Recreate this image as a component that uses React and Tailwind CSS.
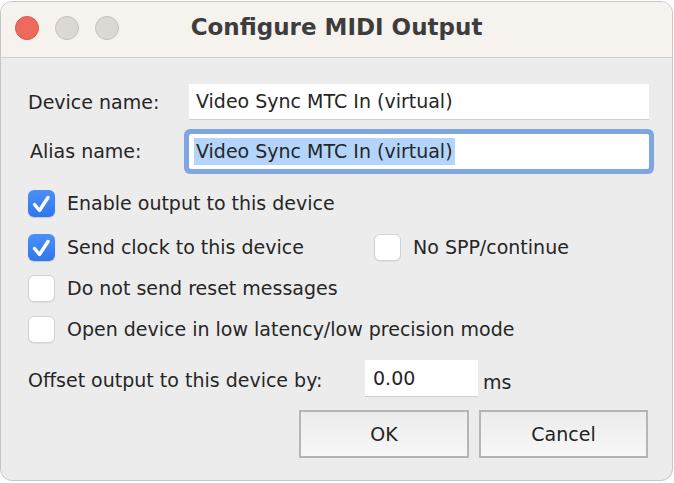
import React from 'react';

const font = { fontFamily: '"DejaVu Sans", "Liberation Sans", sans-serif' };

const CheckBox = ({ checked }) =>
  checked ? (
    <span className="flex h-[27px] w-[27px] shrink-0 items-center justify-center rounded-[6px] bg-gradient-to-b from-[#4b90f8] to-[#2f76ef] shadow-[0_1px_1px_rgba(0,0,0,0.15)]">
      <svg width="27" height="27" viewBox="0 0 27 27" fill="none">
        <path d="M6.5 14.5 L11.5 20.5 L20 7.5" stroke="white" strokeWidth="3.4" strokeLinecap="round" strokeLinejoin="round" />
      </svg>
    </span>
  ) : (
    <span className="block h-[27px] w-[27px] shrink-0 rounded-[6px] border border-[#d2d2d2] bg-white shadow-[0_1px_1px_rgba(0,0,0,0.06)]" />
  );

const CheckRow = ({ checked, label, className = '' }) => (
  <div className={`flex items-center gap-3 ${className}`}>
    <CheckBox checked={checked} />
    <span>{label}</span>
  </div>
);

const Light = ({ color }) => (
  <span className={`block h-[24px] w-[24px] rounded-full border ${color}`} />
);

export default function App() {
  return (
    <div className="h-[483px] w-[674px] bg-white pt-px text-[19px] leading-[27px] text-[#262626]" style={font}>
      <div className="flex h-[480px] w-[673px] flex-col overflow-hidden rounded-[12px] border border-[#c6c6c6] bg-[#ececec]">
        <div className="grid h-[56px] grid-cols-[1fr_auto_1fr] items-center border-b border-[#d4d1cd] bg-[#f6f3ee]">
          <div className="flex items-center gap-4 pl-[14px] pb-[3px]">
            <Light color="bg-[#ee6a5f] border-[#d9564b]" />
            <Light color="bg-[#dcd8d3] border-[#c6c2bd]" />
            <Light color="bg-[#dcd8d3] border-[#c6c2bd]" />
          </div>
          <div className="pb-[4px] text-[23px] font-bold text-[#3d3d3d]">Configure MIDI Output</div>
          <div />
        </div>

        <div className="flex flex-col pl-[27px]">
          <div className="mt-[26px] flex items-center">
            <span className="w-[161px]">Device name:</span>
            <div className="flex h-[36px] w-[460px] items-center border-b border-[#cfcfcf] bg-white pl-[7px]">
              Video Sync MTC In (virtual)
            </div>
          </div>

          <div className="mt-[14px] flex items-center">
            <span className="w-[161px] pl-[2px]">Alias name:</span>
            <div className="flex h-[35px] w-[460px] items-center rounded-[2px] bg-white pl-[5px] ring-[5px] ring-[#7fa6e0]">
              <span className="bg-[#b3d4fb] px-[2px] leading-[27px]">Video Sync MTC In (virtual)</span>
            </div>
          </div>

          <CheckRow checked label="Enable output to this device" className="mt-[21px]" />

          <div className="mt-[17px] flex items-center">
            <CheckRow checked label="Send clock to this device" className="w-[346px]" />
            <CheckRow label="No SPP/continue" />
          </div>

          <CheckRow label="Do not send reset messages" className="mt-[14px]" />
          <CheckRow label="Open device in low latency/low precision mode" className="mt-[14px]" />

          <div className="mt-[17px] flex items-center">
            <span className="w-[337px] pt-[3px]">Offset output to this device by:</span>
            <div className="flex h-[37px] w-[113px] items-center border-b border-[#cfcfcf] bg-white pl-[8px]">0.00</div>
            <span className="ml-[5px] pt-[8px]">ms</span>
          </div>

          <div className="mt-[13px] flex justify-end gap-[10px] pr-[24px]">
            <button type="button" className="h-[48px] w-[170px] border-2 border-[#b5b5b5] bg-gradient-to-b from-[#ececec] to-[#f7f7f7] text-[#222]">OK</button>
            <button type="button" className="h-[48px] w-[169px] border-2 border-[#b5b5b5] bg-gradient-to-b from-[#ececec] to-[#f7f7f7] text-[#222]">Cancel</button>
          </div>
        </div>
      </div>
    </div>
  );
}
